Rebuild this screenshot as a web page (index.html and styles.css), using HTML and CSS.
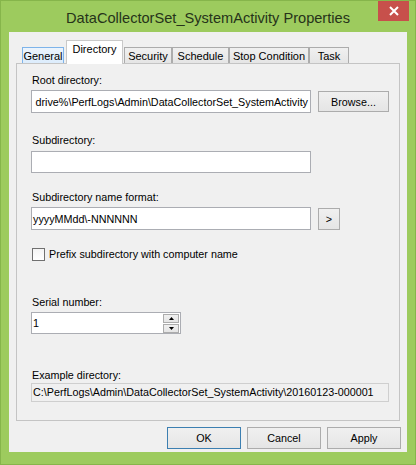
FILE: index.html
```html
<!DOCTYPE html>
<html>
<head>
<meta charset="utf-8">
<link rel="stylesheet" href="styles.css">
</head>
<body>
<div class="window">
  <div class="titlebar">
    <div class="title">DataCollectorSet_SystemActivity Properties</div>
    <div class="close">
      <svg width="10" height="10" viewBox="0 0 10 10"><path d="M1 1 L9 9 M9 1 L1 9" stroke="#fff" stroke-width="2" fill="none"/></svg>
    </div>
  </div>
  <div class="client">
    <div class="tabs">
      <div class="tab hover t-general">General</div>
      <div class="tab selected t-directory">Directory</div>
      <div class="tab t-security">Security</div>
      <div class="tab t-schedule">Schedule</div>
      <div class="tab t-stop">Stop Condition</div>
      <div class="tab t-task">Task</div>
    </div>
    <div class="panel">
      <div class="label l-root">Root directory:</div>
      <div class="row r-root">
        <div class="input wide scrolled"><span>drive%\PerfLogs\Admin\DataCollectorSet_SystemActivity</span></div>
        <div class="btn browse">Browse...</div>
      </div>
      <div class="label l-sub">Subdirectory:</div>
      <div class="input wide i-sub"></div>
      <div class="label l-fmt">Subdirectory name format:</div>
      <div class="row r-fmt">
        <div class="input wide"><span>yyyyMMdd\-NNNNNN</span></div>
        <div class="btn arrow">&gt;</div>
      </div>
      <div class="check-row">
        <div class="checkbox"></div>
        <span>Prefix subdirectory with computer name</span>
      </div>
      <div class="label l-serial">Serial number:</div>
      <div class="input spin">
        <span>1</span>
        <div class="spinbtns">
          <div class="sbtn"><svg width="5" height="3" viewBox="0 0 5 3"><path d="M2.5 0 L5 3 L0 3 Z" fill="#000"/></svg></div>
          <div class="sbtn"><svg width="5" height="3" viewBox="0 0 5 3"><path d="M0 0 L5 0 L2.5 3 Z" fill="#000"/></svg></div>
        </div>
      </div>
      <div class="label l-example">Example directory:</div>
      <div class="example">C:\PerfLogs\Admin\DataCollectorSet_SystemActivity\20160123-000001</div>
    </div>
    <div class="buttons">
      <div class="btn dlg default">OK</div>
      <div class="btn dlg">Cancel</div>
      <div class="btn dlg">Apply</div>
    </div>
  </div>
</div>
</body>
</html>
```
FILE: styles.css
```css
* { box-sizing: border-box; }
html, body { margin: 0; padding: 0; }
body {
  width: 416px;
  height: 465px;
  overflow: hidden;
  font-family: "Liberation Sans", Arial, sans-serif;
  font-size: 10.75px;
  color: #000;
}
.window {
  width: 416px;
  height: 465px;
  background: #9dcb5e;
  border: 1px solid #86b54b;
  display: flex;
  flex-direction: column;
}
.titlebar {
  height: 31px;
  display: grid;
  grid-template-columns: 1fr auto 1fr;
}
.title {
  grid-column: 2;
  font-size: 14.6px;
  color: #26331a;
  padding-top: 8px;
  line-height: 18px;
  white-space: nowrap;
}
.close {
  grid-column: 3;
  justify-self: end;
  align-self: start;
  width: 31px;
  height: 20px;
  margin-right: 6px;
  background: #c7504b;
  display: flex;
  align-items: center;
  justify-content: center;
}
.client {
  margin: 0 8px;
  height: 420px;
  background: #f0f0f0;
  padding: 8px 7px 0 7px;
  display: flex;
  flex-direction: column;
}
.tabs {
  height: 23px;
  display: flex;
  align-items: flex-end;
  padding-left: 6px;
}
.tab {
  height: 16px;
  line-height: 16px;
  text-align: center;
  border: 1px solid #acacac;
  border-bottom: none;
  background: linear-gradient(#f0f0f0, #e5e5e5);
  white-space: nowrap;
  font-size: 11px;
}
.tab.hover {
  background: linear-gradient(#ecf4fc, #dcecfc);
  border-color: #7eb4ea;
}
.tab.selected {
  height: 24px;
  margin-bottom: -1px;
  line-height: 17px;
  background: #fff;
  border-color: #c9c9c9;
  position: relative;
  z-index: 1;
}
.t-general { width: 42px; }
.t-directory { width: 57px; margin-left: 2px; }
.t-security { width: 48px; margin-left: 1px; }
.t-schedule { width: 57px; }
.t-stop { width: 80px; }
.t-task { width: 40px; }
.panel {
  height: 358px;
  border: 1px solid #c4c4c4;
  background: #f0f0f0;
  padding: 8px 0 0 14px;
  display: flex;
  flex-direction: column;
  align-items: flex-start;
}
.label {
  height: 14px;
  line-height: 14px;
  margin-left: 1px;
  white-space: nowrap;
}
.l-root { margin-top: 1px; }
.l-sub { margin-top: 20px; }
.l-fmt { margin-top: 17px; }
.l-serial { margin-top: 34px; }
.l-example { margin-top: 34px; }
.row {
  display: flex;
  align-items: center;
  gap: 7px;
  margin-top: 3px;
}
.input {
  height: 23px;
  background: #fff;
  border: 1px solid #abadb3;
  display: flex;
  align-items: center;
  padding: 0 2px 0 1px;
  overflow: hidden;
  white-space: nowrap;
}
.input.wide { width: 280px; }
.input.scrolled { justify-content: flex-end; }
.i-sub { margin-top: 4px; height: 22px; }
.btn {
  border: 1px solid #acacac;
  background: linear-gradient(#f0f0f0, #e5e5e5);
  display: flex;
  align-items: center;
  justify-content: center;
  white-space: nowrap;
}
.browse { width: 71px; height: 21px; }
.arrow { width: 22px; height: 22px; }
.check-row {
  margin-top: 17px;
  margin-left: 1px;
  display: flex;
  align-items: center;
  gap: 4px;
  height: 14px;
}
.checkbox {
  width: 13px;
  height: 13px;
  border: 1px solid #707070;
  background: linear-gradient(#f4f4f4, #fff);
}
.input.spin {
  width: 150px;
  height: 22px;
  margin-top: 3px;
  justify-content: space-between;
  padding-right: 1px;
}
.spinbtns {
  display: flex;
  flex-direction: column;
  gap: 1px;
}
.sbtn {
  width: 16px;
  height: 9px;
  border: 1px solid #acacac;
  background: linear-gradient(#f0f0f0, #e5e5e5);
  display: flex;
  align-items: center;
  justify-content: center;
}
.example {
  margin-top: 1px;
  width: 358px;
  height: 19px;
  border: 1px solid #cfcfcf;
  background: #f0f0f0;
  line-height: 17px;
  padding-left: 1px;
  white-space: nowrap;
  overflow: hidden;
}
.buttons {
  margin-top: 6px;
  display: flex;
  justify-content: flex-end;
  gap: 6px;
  margin-right: -1px;
}
.dlg { width: 74px; height: 22px; }
.dlg.default { border-color: #3c7fb1; }
```
